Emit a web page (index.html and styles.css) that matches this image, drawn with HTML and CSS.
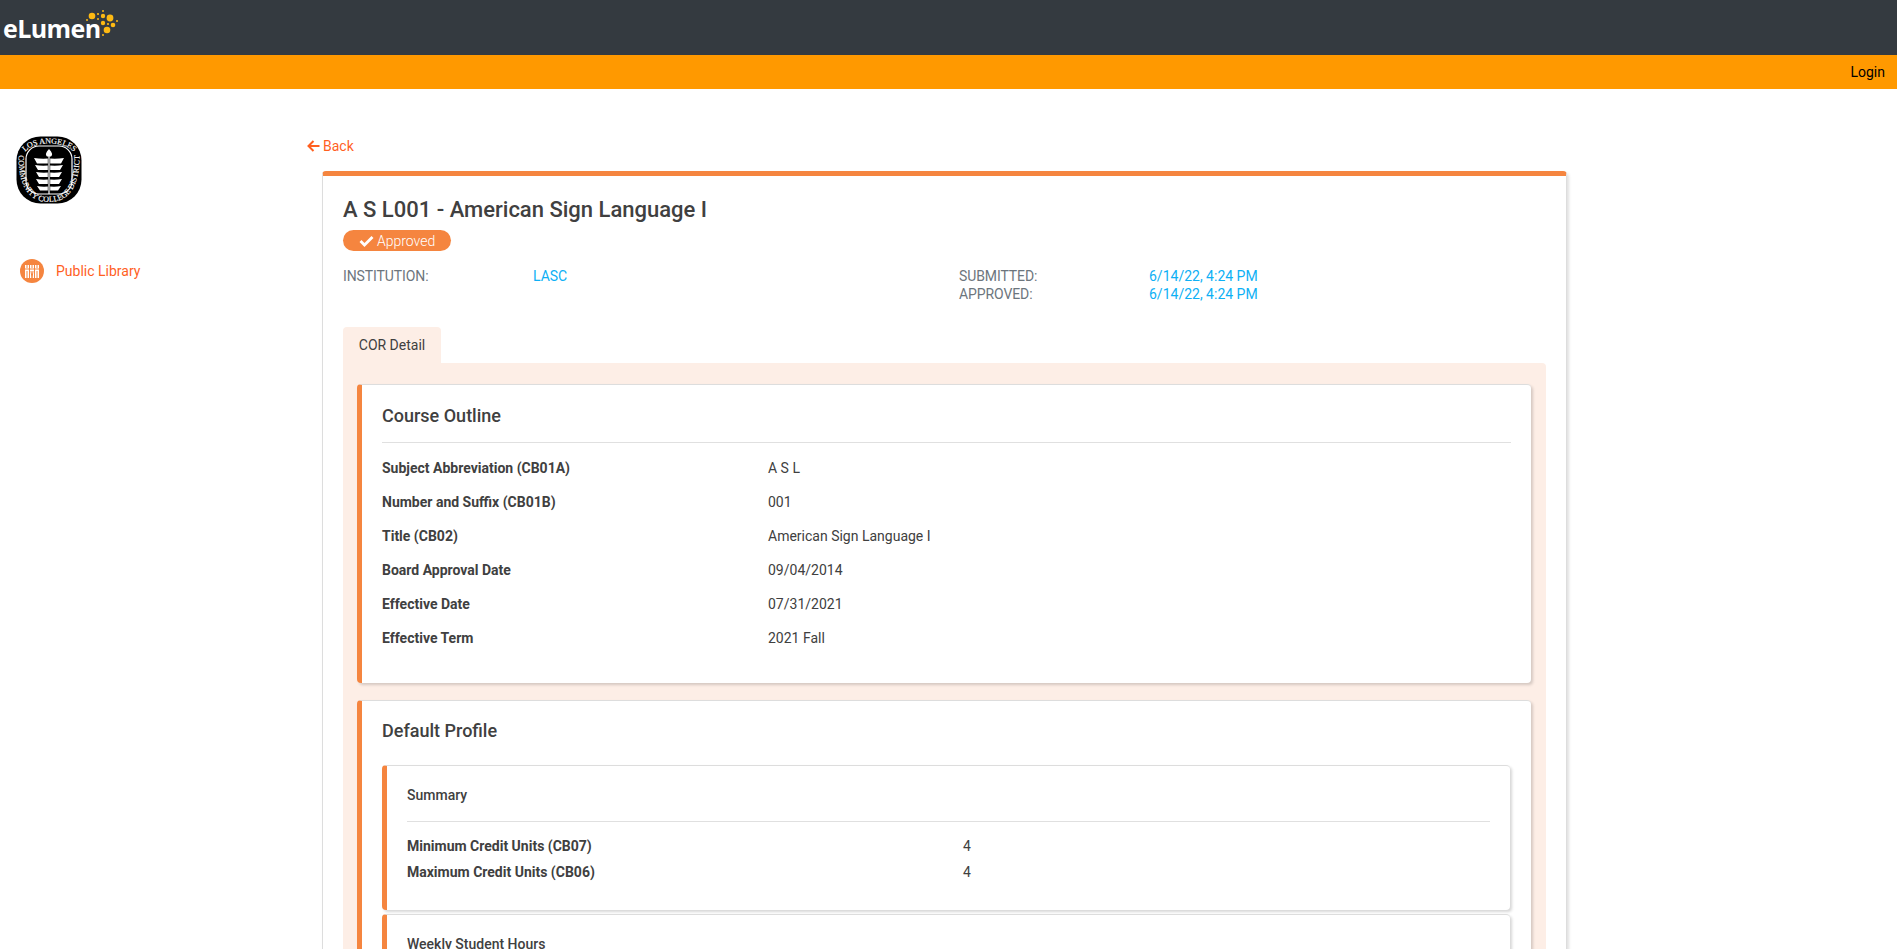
FILE: index.html

```html
<!DOCTYPE html>
<html lang="en">
<head>
    <meta charset="UTF-8">
    <meta name="viewport" content="width=device-width, initial-scale=1.0">
    <title>A S L001 - American Sign Language I</title>
    <link rel="stylesheet" href="styles.css">
</head>
<body>
    <header class="topbar">
        <a class="brand">
            <span class="brand-name">eLumen</span>
            <svg class="brand-dots" width="44" height="30" viewBox="0 0 44 30">
                <g fill="#fdb913">
                    <circle cx="6" cy="7" r="3.300"/><circle cx="17" cy="7" r="2.200"/><circle cx="24" cy="9" r="3.400"/>
                    <circle cx="17" cy="14" r="2.200"/><circle cx="27" cy="16" r="2.300"/><circle cx="21" cy="21" r="3.300"/>
                    <circle cx="17" cy="2" r="1"/><circle cx="12" cy="5" r="1.100"/><circle cx="12" cy="10" r="1"/>
                    <circle cx="1" cy="11" r="1"/><circle cx="22" cy="15" r="1.100"/><circle cx="31" cy="12" r="1"/>
                    <circle cx="17" cy="26" r="1"/>
                </g>
            </svg>
        </a>
    </header>
    <div class="subbar"><a class="login">Login</a></div>

    <div class="layout">
        <aside class="sidebar">
            <svg class="seal" width="66" height="68" viewBox="0 0 66 68">
                <defs>
                    <path id="sealTop" d="M6 20 C12 10 22 7.500 33 7.500 C44 7.500 54 10 61 20"/>
                    <path id="sealBottom" d="M3 8 C0.500 40 7 66 33 66 C59 66 65.500 40 63 8"/>
                </defs>
                <rect x="0.500" y="0.500" width="65" height="67" rx="24" fill="#000"/>
                <rect x="10" y="10" width="46" height="48" rx="13" fill="#000" stroke="#fff" stroke-width="1.200"/>
                <text class="seal-text"><textPath href="#sealTop" startOffset="50%" text-anchor="middle">LOS ANGELES</textPath><textPath href="#sealBottom" startOffset="50%" text-anchor="middle">COMMUNITY COLLEGE DISTRICT</textPath></text>
                <g fill="#fff">
                    <path d="M33 13 C36 16.500 37 18.500 35 20.500 L31 20.500 C29 18.500 30 16.500 33 13Z"/>
                    <path d="M18 22 Q25 23 31.800 22.500 V27.500 H21Z M48 22 Q41 23 34.200 22.500 V27.500 H45Z"/>
                    <path d="M19 29 Q25 30 31.800 29.500 V34 H22Z M47 29 Q41 30 34.200 29.500 V34 H44Z"/>
                    <path d="M20 36 Q26 37 31.800 36.500 V41 H23Z M46 36 Q40 37 34.200 36.500 V41 H43Z"/>
                    <path d="M20 43 Q26 44 31.800 43.500 V48 H23Z M46 43 Q40 44 34.200 43.500 V48 H43Z"/>
                    <path d="M21 50 Q26 51 31.800 50.500 V54.500 H24Z M45 50 Q40 51 34.200 50.500 V54.500 H42Z"/>
                    <rect x="32.400" y="19" width="1.200" height="39"/>
                </g>
            </svg>
            <a class="side-link">
                <span class="side-icon">
                    <svg width="16" height="15" viewBox="0 0 16 15">
                        <path fill="#fff" d="M1 1h14v13H1z"/>
                        <path fill="none" stroke="#f5853f" stroke-width="1" d="M1 5h14M5.500 1v13M10.500 1v13M3 1v3M8 1v3M13 1v3M3 7v7M13 7v7M7 7l1 7M9 7l-1 7"/>
                    </svg>
                </span>
                Public Library
            </a>
        </aside>

        <main class="content">
            <a class="back"><svg width="13" height="12" viewBox="0 0 13 12"><path d="M6.500 1 1.500 6 6.500 11M1.500 6H12.500" fill="none" stroke="#ff5f1f" stroke-width="2"/></svg>Back</a>

            <section class="course">
                <h1>A S L001 - American Sign Language I</h1>
                <span class="badge"><svg width="15" height="12" viewBox="0 0 15 12"><path d="M1.500 6 5.500 10 13.500 2" fill="none" stroke="#fff" stroke-width="2.800"/></svg>Approved</span>
                <div class="meta">
                    <div class="meta-row"><span class="meta-label">INSTITUTION:</span><a class="meta-value">LASC</a></div>
                    <div>
                        <div class="meta-row"><span class="meta-label">SUBMITTED:</span><a class="meta-value">6/14/22, 4:24 PM</a></div>
                        <div class="meta-row"><span class="meta-label">APPROVED:</span><a class="meta-value">6/14/22, 4:24 PM</a></div>
                    </div>
                </div>

                <div class="tab">COR Detail</div>
                <div class="tab-panel">
                    <div class="panel">
                        <h2>Course Outline</h2>
                        <div class="row"><b>Subject Abbreviation (CB01A)</b><span>A S L</span></div>
                        <div class="row"><b>Number and Suffix (CB01B)</b><span>001</span></div>
                        <div class="row"><b>Title (CB02)</b><span>American Sign Language I</span></div>
                        <div class="row"><b>Board Approval Date</b><span>09/04/2014</span></div>
                        <div class="row"><b>Effective Date</b><span>07/31/2021</span></div>
                        <div class="row"><b>Effective Term</b><span>2021 Fall</span></div>
                    </div>

                    <div class="panel profile">
                        <h2>Default Profile</h2>
                        <div class="panel sub">
                            <h3>Summary</h3>
                            <div class="sub-row"><b>Minimum Credit Units (CB07)</b><span>4</span></div>
                            <div class="sub-row"><b>Maximum Credit Units (CB06)</b><span>4</span></div>
                        </div>
                        <div class="panel sub">
                            <h3>Weekly Student Hours</h3>
                        </div>
                    </div>
                </div>
            </section>
        </main>
    </div>
</body>
</html>
```

FILE: styles.css

```css
html, body { height: 100%; overflow: hidden; }
body { margin: 0; font-family: Roboto, sans-serif; font-size: 14px; color: #404040; background: #fff; }
h1, h2, h3 { margin: 0; font-weight: 500; }

.topbar { height: 55px; background: #343a40; }
.brand { display: block; position: relative; width: 120px; height: 55px; }
.brand-name { position: absolute; left: 3px; top: 12px; font: bold 25px/32px "Open Sans", sans-serif; letter-spacing: -0.6px; color: #fff; }
.brand-dots { position: absolute; left: 86px; top: 9px; overflow: visible; }
.subbar { height: 34px; background: #ff9900; display: flex; align-items: center; justify-content: flex-end; padding-right: 12px; }
.login { color: #000; font-size: 14px; }

.layout { display: grid; grid-template-columns: 307px 1260px; }
.sidebar { padding: 47px 0 0 16px; }
.seal { display: block; overflow: visible; }
.seal-text { font: 8px "Liberation Serif", serif; fill: #fff; stroke: #fff; stroke-width: .15px; }
.side-link { display: flex; align-items: center; gap: 12px; margin: 55px 0 0 4px; color: #ff5f1f; }
.side-icon { width: 24px; height: 24px; border-radius: 50%; background: #f5853f; display: flex; align-items: center; justify-content: center; }

.content { padding-top: 47px; }
.back { display: flex; align-items: center; gap: 3px; height: 20px; color: #ff5f1f; }
.course { margin: 15px 0 0 15px; height: 900px; padding: 20px 20px 0; border: 1px solid #ddd; border-top: 5px solid #f5853f; border-radius: 4px 4px 0 0; box-shadow: 2px 2px 3px rgba(0, 0, 0, .12); }
.course h1 { font-size: 22px; line-height: 28px; }
.badge { display: flex; align-items: center; gap: 3px; width: 108px; height: 21px; margin-top: 6px; padding-left: 16px; box-sizing: border-box; border-radius: 11px; background: #f5853f; color: #fff; font-weight: 300; }
.meta { display: grid; grid-template-columns: 616px 1fr; margin-top: 16px; height: 60px; color: #6c757d; }
.meta-row { display: grid; grid-template-columns: 190px 1fr; line-height: 18px; }
.meta-label { font-weight: 400; letter-spacing: -.1px; }
.meta-value { color: #0db0f5; }

.tab { width: 98px; height: 36px; line-height: 36px; text-align: center; background: #fdeee6; border-radius: 4px 4px 0 0; }
.tab-panel { padding: 21px 15px 0 14px; background: #fdeee6; height: 700px; border-radius: 0 4px 0 0; }
.panel { background: #fff; border-left: 5px solid #f5853f; border-top: 1px solid #ddd; border-radius: 4px; box-shadow: 2px 2px 3px rgba(0, 0, 0, .16); padding: 17px 20px 29px; height: 299px; box-sizing: border-box; margin-bottom: 17px; }
.panel h2 { font-size: 18px; line-height: 28px; padding-bottom: 12px; border-bottom: 1px solid #e0e0e0; margin-bottom: 8px; }
.row { display: grid; grid-template-columns: 386px 1fr; height: 34px; align-items: center; }
.row b, .sub-row b { font-weight: 700; }

.profile { height: 600px; padding-right: 21px; }
.profile > h2 { border-bottom: 0; margin-bottom: 0; padding-bottom: 19px; margin-top: -1px; }
.sub { height: 145px; padding: 15px 20px 0; margin-bottom: 4px; margin-top: 1px; }
.sub h3 { font-size: 14px; line-height: 20px; padding: 5px 0 16px; border-bottom: 1px solid #e0e0e0; margin-bottom: 11px; margin-top: -1px; }
.sub-row { display: grid; grid-template-columns: 556px 1fr; height: 26px; align-items: center; }
```
